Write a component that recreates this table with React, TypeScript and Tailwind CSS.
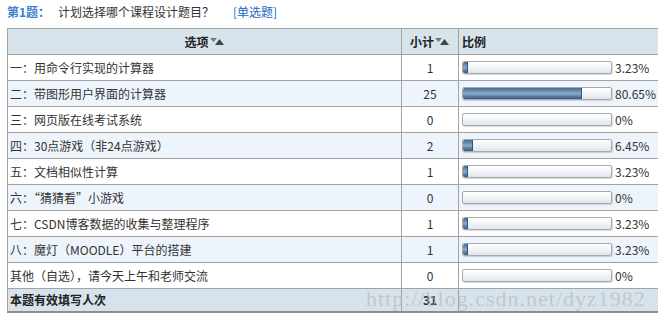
import React from "react";

type Row = { label: string; count: number; pct: number; text: string };

const rows: Row[] = [
  { label: "一：用命令行实现的计算器", count: 1, pct: 3.23, text: "3.23%" },
  { label: "二：带图形用户界面的计算器", count: 25, pct: 80.65, text: "80.65%" },
  { label: "三：网页版在线考试系统", count: 0, pct: 0, text: "0%" },
  { label: "四：30点游戏（非24点游戏）", count: 2, pct: 6.45, text: "6.45%" },
  { label: "五：文档相似性计算", count: 1, pct: 3.23, text: "3.23%" },
  { label: "六：“猜猜看”小游戏", count: 0, pct: 0, text: "0%" },
  { label: "七：CSDN博客数据的收集与整理程序", count: 1, pct: 3.23, text: "3.23%" },
  { label: "八：魔灯（MOODLE）平台的搭建", count: 1, pct: 3.23, text: "3.23%" },
  { label: "其他（自选），请今天上午和老师交流", count: 0, pct: 0, text: "0%" },
];

const SortIcon = () => (
  <svg width="15" height="9" viewBox="0 0 15 9" className="inline-block ml-[1px] align-[1px]">
    <polygon points="0,1 7,1 3.5,5" fill="#777" />
    <polygon points="5,8 14,8 9.5,2" fill="#444" />
  </svg>
);

const Bar = ({ pct }: { pct: number }) => (
  <div className="relative h-[13px] w-[150px] rounded-[2px] border border-[#a9a9a9] bg-gradient-to-b from-[#ffffff] via-[#f1f4f8] to-[#dfe5ec] shadow-[1px_1px_1px_rgba(0,0,0,0.15)] overflow-hidden">
    {pct > 0 && (
      <div
        className="h-full rounded-l-[2px] bg-gradient-to-b from-[#3f6b98] via-[#8fa9c4] to-[#2d5887] border-r border-[#2d5680]"
        style={{ width: `${Math.max(pct, 2.6)}%` }}
      />
    )}
  </div>
);

export default function App() {
  return (
    <div
      className="relative w-[658px] h-[314px] overflow-hidden bg-white text-[12px] text-[#333]"
      style={{ fontFamily: '"Noto Sans CJK SC", "Noto Sans", sans-serif' }}
    >
      <div className="flex items-center h-[24px] pl-[7px]">
        <span className="font-bold text-[#3d80d0] w-[51px]">第1题：</span>
        <span className="text-[#333] w-[175px]">计划选择哪个课程设计题目？</span>
        <span className="text-[#1b67c9]">[单选题]</span>
      </div>
      <div className="pl-[7px] pt-[4px]">
        <table className="border-collapse w-[700px] table-fixed">
          <colgroup>
            <col className="w-[394px]" />
            <col className="w-[57px]" />
            <col />
          </colgroup>
          <thead>
            <tr className="h-[26px] bg-[#d8e4ec]">
              <th className="border border-[#a3a3a3] text-center font-bold text-[#222] p-0">
                选项<SortIcon />
              </th>
              <th className="border border-[#a3a3a3] text-center font-bold text-[#222] p-0">
                小计<SortIcon />
              </th>
              <th className="border border-[#a3a3a3] text-left font-bold text-[#222] pl-[3px] p-0">比例</th>
            </tr>
          </thead>
          <tbody>
            {rows.map((r, i) => (
              <tr key={r.label} className={`h-[26px] ${i % 2 === 1 ? "bg-[#edf4fb]" : "bg-white"}`}>
                <td className="border border-[#a3a3a3] pl-[2px] p-0 whitespace-nowrap">{r.label}</td>
                <td className="border border-[#a3a3a3] text-center p-0">{r.count}</td>
                <td className="border border-[#a3a3a3] p-0 pl-[3px]">
                  <div className="flex items-center gap-[3px]">
                    <Bar pct={r.pct} />
                    <span>{r.text}</span>
                  </div>
                </td>
              </tr>
            ))}
            <tr className="h-[23px] bg-[#d6e3ec]">
              <td className="border border-[#a3a3a3] border-b-[2px] border-b-[#8c8c8c] font-bold pl-[2px] p-0 text-[#222]">
                本题有效填写人次
              </td>
              <td className="border border-[#a3a3a3] border-b-[2px] border-b-[#8c8c8c] text-center font-bold p-0 text-[#222]">
                31
              </td>
              <td className="border border-[#a3a3a3] border-b-[2px] border-b-[#8c8c8c] p-0"></td>
            </tr>
          </tbody>
        </table>
      </div>
      <div
        className="pointer-events-none absolute left-[366px] top-[282px] text-[22px] tracking-[1px] text-[#b4b4b4]/60 whitespace-nowrap"
        style={{ fontFamily: '"Liberation Serif", serif' }}
      >
        http://blog.csdn.net/dyz1982
      </div>
    </div>
  );
}
